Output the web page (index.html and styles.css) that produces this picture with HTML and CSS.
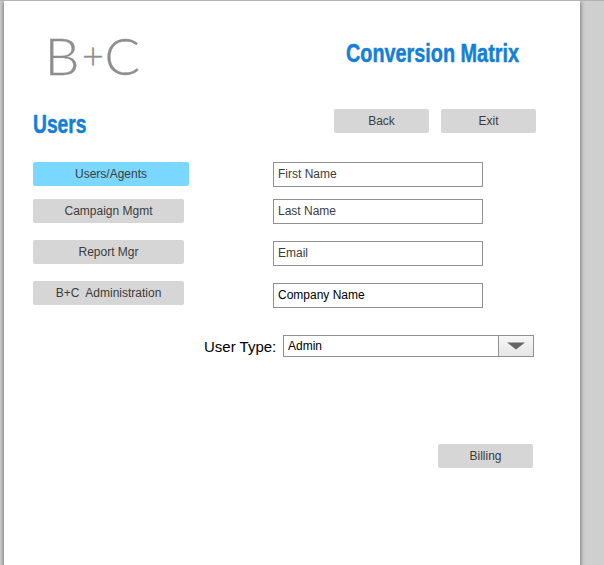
FILE: index.html
```
<!DOCTYPE html>
<html lang="en">
<head>
<meta charset="utf-8">
<title>Conversion Matrix</title>
<link rel="stylesheet" href="styles.css">
</head>
<body>
<main class="page">
  <header class="header">
    <svg class="logo" width="104" height="74" viewBox="0 -14 104 74" role="img" aria-label="B+C">
      <text x="-.5" y="41" font-size="51" textLength="35" lengthAdjust="spacingAndGlyphs">B</text>
      <text class="plus" x="37" y="35" font-size="36" textLength="22" lengthAdjust="spacingAndGlyphs">+</text>
      <text x="59.5" y="41" font-size="51" textLength="35.5" lengthAdjust="spacingAndGlyphs">C</text>
    </svg>
    <h1 class="brand"><svg width="182" height="36" viewBox="0 -3 182 36"><text x="1" y="22" textLength="173" lengthAdjust="spacingAndGlyphs">Conversion Matrix</text></svg></h1>
  </header>
  <div class="toolbar">
    <h2 class="title"><svg width="60" height="36" viewBox="0 -3 60 36"><text x="0" y="22" textLength="53.5" lengthAdjust="spacingAndGlyphs">Users</text></svg></h2>
    <div class="actions">
      <button class="btn">Back</button>
      <button class="btn">Exit</button>
    </div>
  </div>
  <div class="content">
    <nav class="nav">
      <button class="btn active">Users/Agents</button>
      <button class="btn">Campaign Mgmt</button>
      <button class="btn">Report Mgr</button>
      <button class="btn">B+C&nbsp; Administration</button>
    </nav>
    <form class="fields">
      <div class="field">First Name</div>
      <div class="field">Last Name</div>
      <div class="field">Email</div>
      <div class="field filled">Company Name</div>
    </form>
  </div>
  <div class="type-row">
    <span class="type-label">User Type:</span>
    <div class="select">
      <span class="value">Admin</span>
      <span class="arrow"><svg width="18" height="8"><path d="M0 0.5H18L9 7.5Z" fill="#666"/></svg></span>
    </div>
  </div>
  <footer class="footer"><button class="btn">Billing</button></footer>
</main>
</body>
</html>
```

FILE: styles.css
```
* { box-sizing: border-box; }
body {
  margin: 0;
  height: 565px;
  overflow: hidden;
  background: #cfcfcf;
  border-top: 1px solid #b3b3b3;
  font: 12px/14px "Liberation Sans", Arial, sans-serif;
  color: #3c3c3c;
}
.page {
  width: 576px;
  height: 564px;
  margin-left: 4px;
  padding-left: 29px;
  background: #fff;
  box-shadow: 0 2px 4px 1px rgba(0, 0, 0, .4);
}
h1, h2 { margin: 0; height: 36px; }
h1 svg, h2 svg { display: block; }
h1 text, h2 text {
  font: bold 25px "Liberation Sans", Arial, sans-serif;
  fill: #147fd7;
  stroke: #147fd7;
  stroke-width: .5px;
}
.header {
  display: flex;
  height: 107px;
  padding: 19px 0 0 12px;
}
.logo {
  font-family: Lato, sans-serif;
  font-weight: 300;
  fill: #8e8e8e;
  stroke: #8e8e8e;
  stroke-width: .3px;
}
.brand { margin: 17px 0 0 196px; }
.toolbar {
  display: flex;
  justify-content: space-between;
  width: 503px;
  height: 54px;
}
.title { margin-top: 0; }
.actions { display: flex; gap: 12px; padding-top: .5px; }
.btn {
  display: flex;
  align-items: center;
  justify-content: center;
  width: 95px;
  height: 24px;
  padding: 0;
  border: 0;
  border-radius: 2px;
  background: #d6d6d6;
  font: inherit;
  color: inherit;
}
.content { display: flex; height: 146px; }
.nav { width: 240px; }
.nav .btn { width: 151px; margin-bottom: 17px; }
.nav .active { width: 156px; margin-bottom: 13px; background: #7ad7ff; }
.field {
  width: 210px;
  height: 25px;
  margin-bottom: 17px;
  padding: 4px;
  border: 1px solid #919191;
}
.field:first-child { margin-bottom: 12px; }
.filled { margin: 0; color: #000; }
.type-row {
  display: flex;
  margin: 27px 0 0 171px;
  color: #000;
}
.type-label { width: 79px; padding-top: 3px; font-size: 15px; line-height: 18px; }
.select {
  display: flex;
  width: 251px;
  height: 22px;
  border: 1px solid #919191;
}
.value { flex: 1; padding: 3px 4px; }
.arrow {
  display: flex;
  align-items: center;
  justify-content: center;
  width: 35px;
  border-left: 1px solid #919191;
  background: linear-gradient(#f7f7f7, #e6e6e6);
}
.footer { margin: 87px 0 0 405px; }
```
